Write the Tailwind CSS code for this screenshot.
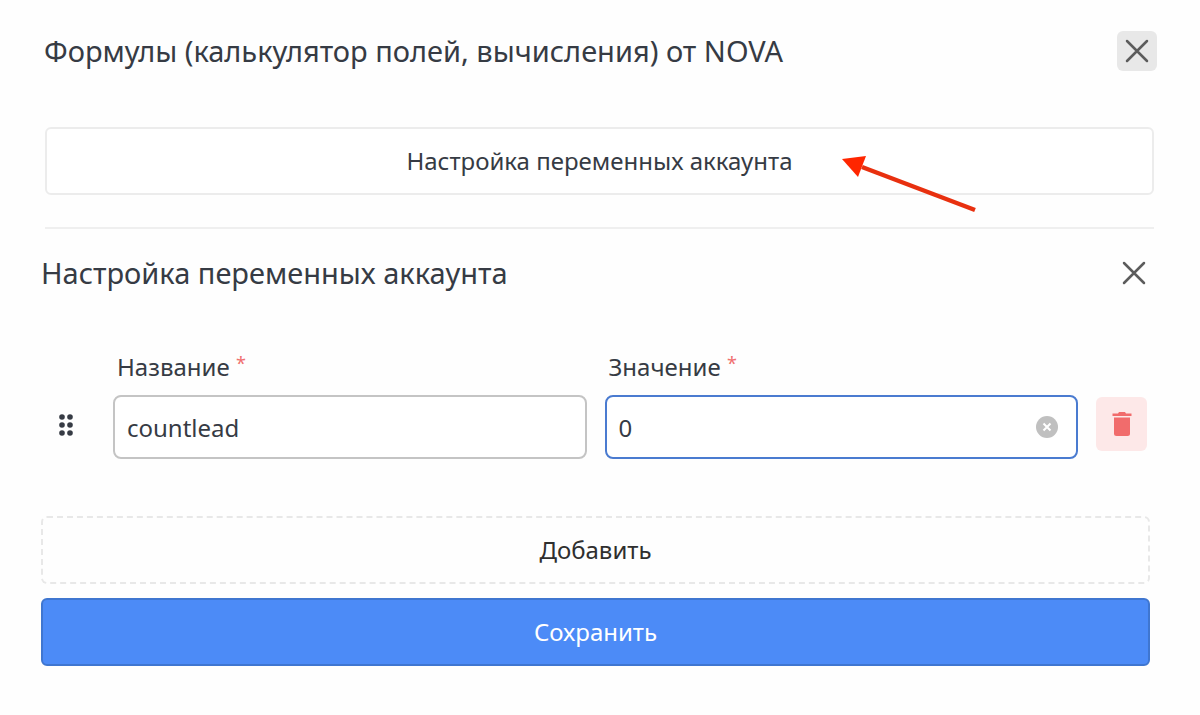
<!DOCTYPE html>
<html lang="ru">
<head>
    <meta charset="UTF-8">
    <meta name="viewport" content="width=device-width,initial-scale=1.0">
    <title>Формулы от NOVA</title>
    <script src="https://cdn.jsdelivr.net/npm/@tailwindcss/browser@4"></script>
</head>
<body class="bg-[#fefefe] text-[#363b44] font-['Noto_Sans',sans-serif]">
    <header class="flex items-center justify-between pt-[31px] pl-11 pr-[43px]">
        <h1 class="text-[29px] leading-10">Формулы (калькулятор полей, вычисления) от NOVA</h1>
        <button type="button" aria-label="Закрыть" class="flex size-10 items-center justify-center rounded-md bg-[#e8e8e8] hover:bg-gray-300">
            <svg class="size-6" viewBox="0 0 24 24" fill="none" stroke="#5c5c5c" stroke-width="2.5" stroke-linecap="round">
                <path d="M2 2 L22 22 M22 2 L2 22"/>
            </svg>
        </button>
    </header>

    <section class="relative mt-14 ml-[45px] mr-[46px] border-b-2 border-[#efefef] pb-8">
        <button type="button" class="h-17 w-full rounded-md border-2 border-[#ececec] bg-white text-2xl hover:bg-gray-50">
            Настройка переменных аккаунта
        </button>
        <!-- pointer to the settings button -->
        <svg class="pointer-events-none absolute right-[176px] top-7 h-[60px] w-[136px]" viewBox="0 0 136 60">
            <path d="M20 12 L133 55" stroke="#e8300f" stroke-width="4.500"/>
            <path d="M0 4 L24 1 L16 22 Z" fill="#ff2600"/>
        </svg>
    </section>

    <section class="pl-[41px] pr-[50px] pt-6">
        <div class="flex items-center justify-between">
            <h2 class="text-[29px] leading-10">Настройка переменных аккаунта</h2>
            <button type="button" aria-label="Закрыть настройку" class="flex h-10 w-8 items-center justify-center">
                <svg class="size-6" viewBox="0 0 24 24" fill="none" stroke="#5c5c5c" stroke-width="2.5" stroke-linecap="round">
                    <path d="M2 2 L22 22 M22 2 L2 22"/>
                </svg>
            </button>
        </div>

        <form id="variables-form">
            <div class="mt-[58px] flex items-end pr-[3px]">
                <button type="button" aria-label="Переместить" class="flex h-16 w-[72px] shrink-0 items-center pb-1 pl-[17px]">
                    <svg class="h-6 w-4" viewBox="0 0 16 24" fill="#363b44">
                        <circle cx="4" cy="4" r="2.8"/>
                        <circle cx="12" cy="4" r="2.8"/>
                        <circle cx="4" cy="12" r="2.8"/>
                        <circle cx="12" cy="12" r="2.8"/>
                        <circle cx="4" cy="20" r="2.8"/>
                        <circle cx="12" cy="20" r="2.8"/>
                    </svg>
                </button>

                <div class="flex-1">
                    <label for="name" class="block pl-1 text-2xl leading-8">
                        Название <span class="align-[6px] text-lg leading-none text-[#f0706f]">*</span>
                    </label>
                    <input type="text" id="name" name="name" value="countlead"
                    class="mt-3 block h-16 w-full rounded-lg border-2 border-[#c4c4c4] bg-white px-3 text-2xl outline-none focus:border-[#4a7bd0]">
                </div>

                <div class="ml-[18px] flex-1">
                    <label for="value" class="block pl-1 text-2xl leading-8">
                        Значение <span class="align-[6px] text-lg leading-none text-[#f0706f]">*</span>
                    </label>
                    <div class="relative mt-3">
                        <input type="text" id="value" name="value" value="0"
                        class="block h-16 w-full rounded-lg border-2 border-[#4a7bd0] bg-white pl-3 pr-12 text-2xl outline-none">
                        <button type="button" id="clear-value" aria-label="Очистить" class="absolute inset-y-0 right-5 flex items-center">
                            <svg class="size-[22px]" viewBox="0 0 22 22">
                                <circle cx="11" cy="11" r="11" fill="#c0c0c0"/>
                                <path d="M7.5 7.5 L14.5 14.5 M14.5 7.5 L7.5 14.5" stroke="#fff" stroke-width="2"/>
                            </svg>
                        </button>
                    </div>
                </div>

                <button type="button" aria-label="Удалить" class="mb-2 ml-[18px] flex h-[54px] w-[51px] shrink-0 items-center justify-center rounded-md bg-[#fde8e8] hover:bg-red-200">
                    <svg class="h-6 w-5" viewBox="0 0 20 24" fill="#f16c6c">
                        <path d="M.5 1.5 H6 L7 0 H13 L14 1.5 H19.5 V4 H.5 Z"/>
                        <path d="M2 5.5 H18 V21.500 Q18 24 15.500 24 H4.500 Q2 24 2 21.500 Z"/>
                    </svg>
                </button>
            </div>

            <button type="button" class="mt-[57px] block h-17 w-full rounded-md border-2 border-dashed border-[#e8e8e8] text-2xl text-[#2f2f2f] hover:bg-gray-50">
                Добавить
            </button>
            <button type="submit" class="mt-[14px] block h-17 w-full rounded-md border-2 border-[#3f76d0] bg-[#4c8bf7] text-2xl text-white hover:bg-blue-600">
                Сохранить
            </button>
        </form>
    </section>

    <script>
        const value = document.getElementById('value')
        document.getElementById('clear-value').addEventListener('click', () => {
            value.value = ''
            value.focus()
        })
        document.getElementById('variables-form').addEventListener('submit', (event) => event.preventDefault())
    </script>
</body>
</html>
